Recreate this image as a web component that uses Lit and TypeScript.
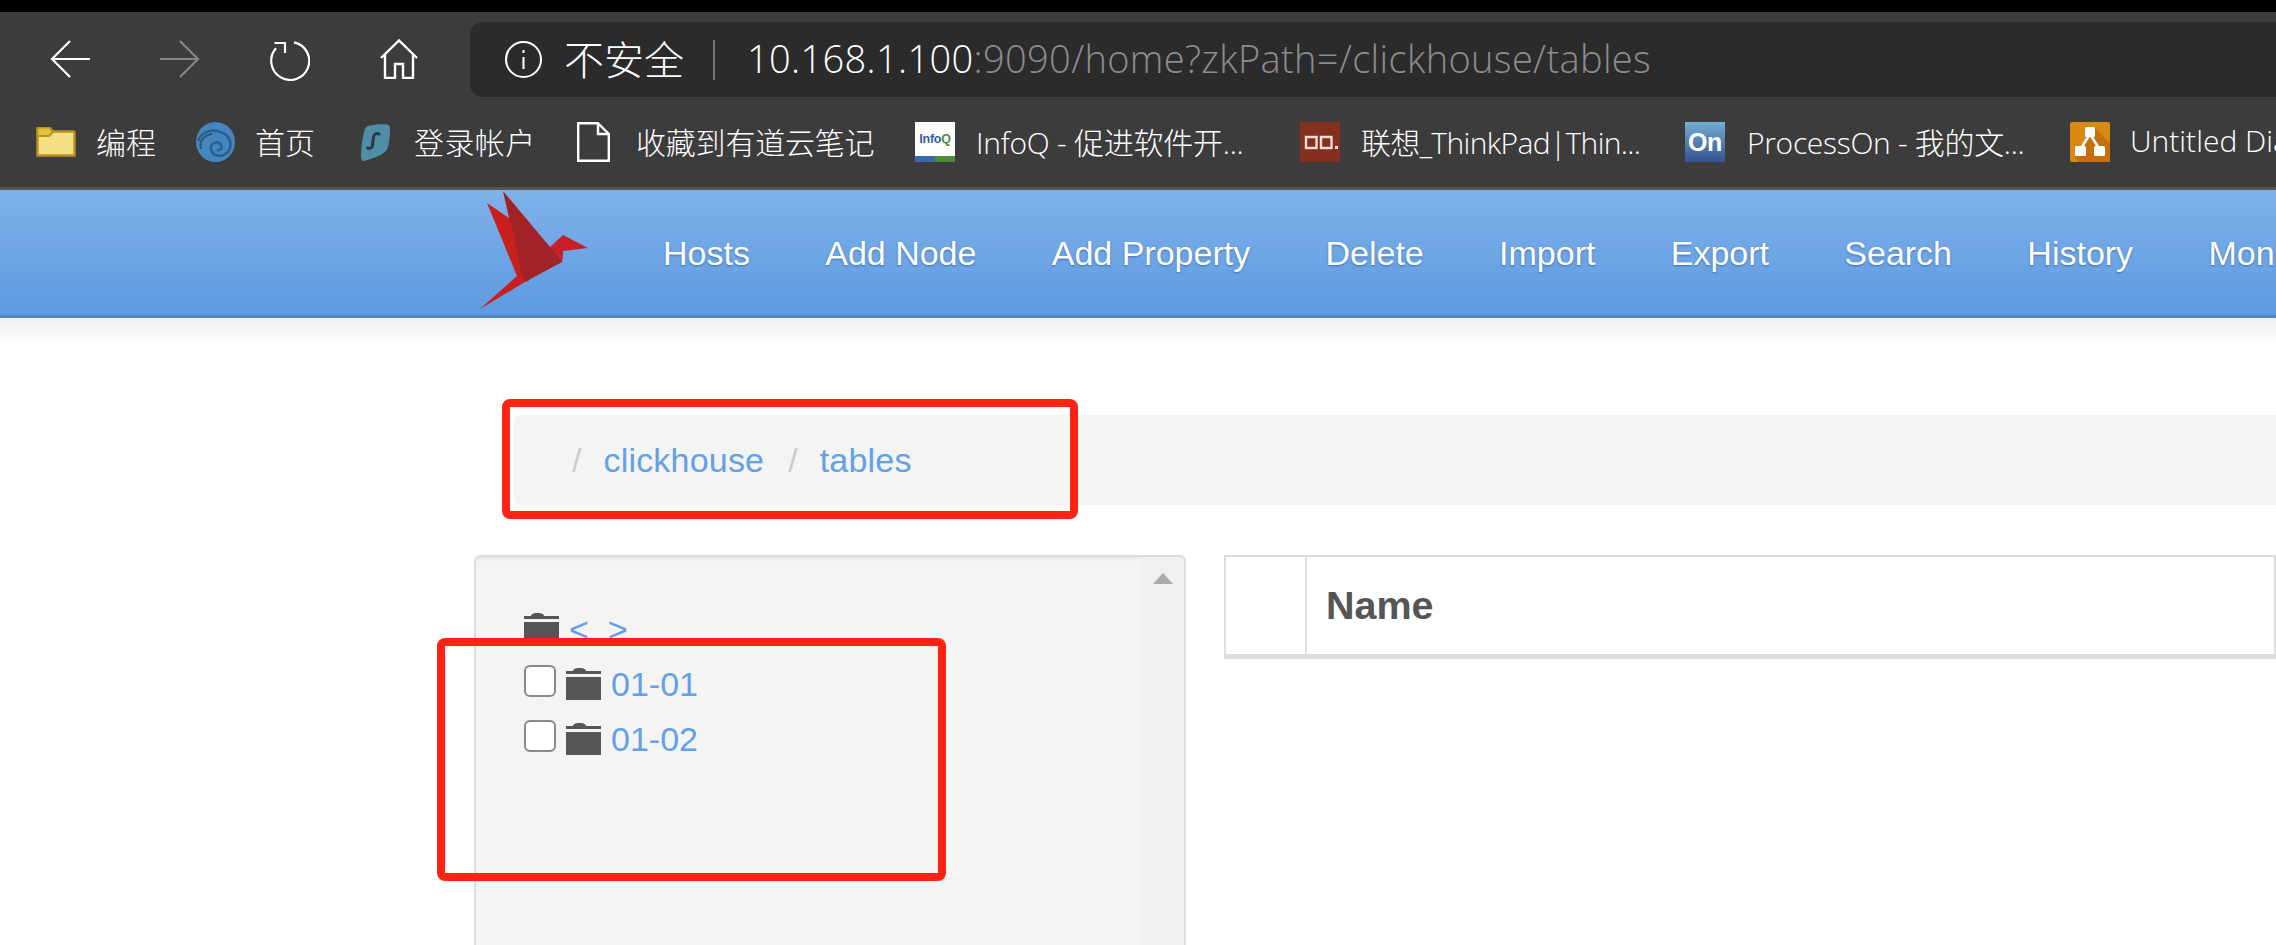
import { LitElement, html, css, svg } from "lit";
import { customElement } from "lit/decorators.js";

const folderIcon = html`<svg width="40" height="30" viewBox="0 0 40 30">
  <path d="M1.5 28.5V2a1.5 1.5 0 0 1 1.5-1.5h10l4 4h20a1.5 1.5 0 0 1 1.5 1.5v22.5z" fill="#f6e084" stroke="#b8951f" stroke-width="2.4"/>
  <path d="M1.5 9V2a1.5 1.5 0 0 1 1.5-1.5h10l4 4.5-4 4z" fill="#e6c243" stroke="#b8951f" stroke-width="2"/>
</svg>`;
const swirlIcon = html`<svg width="41" height="40" viewBox="0 0 41 40">
  <ellipse cx="20.5" cy="20" rx="19.5" ry="20" fill="#4586c0"/>
  <path d="M3 19C7 9 18 6 28 11c8 4 10 14 4 20-6 5-15 3-16-4-1-6 7-9 10-4 2 3-1 6-4 5" fill="none" stroke="#2b5f8f" stroke-width="2.6"/>
  <path d="M6 27c-2-8 3-14 11-15" fill="none" stroke="#34536e" stroke-width="2"/>
</svg>`;
const sharkIcon = html`<svg width="29" height="37" viewBox="0 0 29 37">
  <path d="M7 2C12 .5 20 0 26 .5c2 .2 3 2 3 5 0 8-1 15-3 20-3 5-13 9-23 11.500C1 37 0 35 0 33 0 22 2 11 4 5c.5-1.500 1.500-2.500 3-3z" fill="#4f8ea6"/>
  <path d="M18 10c-3-1-5 0-5.500 3l-1 8c-.4 3-2.500 4-5 3" fill="none" stroke="#2d3a40" stroke-width="3" stroke-linecap="round"/>
</svg>`;
const docIcon = html`<svg width="33" height="40" viewBox="0 0 33 40">
  <path d="M1.200 1.200H21L31.800 12V38.800H1.200zM21 1.200V12H31.800" fill="none" stroke="#fff" stroke-width="2.400"/>
</svg>`;
const drawioIcon = html`<svg width="40" height="40" viewBox="0 0 40 40">
  <rect width="40" height="40" rx="2" fill="#d98a16"/>
  <path d="M24 5l16 16v17a2 2 0 0 1-2 2H8L5 36z" fill="#c4700f"/>
  <path d="M20 12L10 28M20 12l10 16" stroke="#fff" stroke-width="2.500"/>
  <rect x="15" y="5" width="10" height="10" rx="1.500" fill="#fff"/>
  <rect x="5" y="24" width="11" height="10" rx="1.500" fill="#fff"/>
  <rect x="24" y="24" width="11" height="10" rx="1.500" fill="#fff"/>
</svg>`;
const lenovoIcon = html`<svg width="40" height="40" viewBox="0 0 40 40">
  <rect width="40" height="40" fill="#85301f"/>
  <rect x="6" y="15" width="10.500" height="11" fill="#85301f" stroke="#f3dfda" stroke-width="2.400"/>
  <rect x="21" y="15" width="10.500" height="11" fill="#85301f" stroke="#f3dfda" stroke-width="2.400"/>
  <rect x="35" y="24" width="3" height="3" fill="#f3dfda"/>
</svg>`;

interface Bookmark { label: string; textAt: number; spacing: number; icon: unknown; }

const bookmarks: Bookmark[] = [
  { label: "编程", textAt: 60, spacing: 0, icon: folderIcon },
  { label: "首页", textAt: 60, spacing: 0, icon: swirlIcon },
  { label: "登录帐户", textAt: 53, spacing: 0.4, icon: sharkIcon },
  { label: "收藏到有道云笔记", textAt: 59, spacing: -0.2, icon: docIcon },
  { label: "InfoQ - 促进软件开...", textAt: 61, spacing: -0.25, icon: html`<div class="fav infoq"><span class="infoq-name">Info<em>Q</em></span><i class="infoq-bar"></i></div>` },
  { label: "联想_ThinkPad|Thin...", textAt: 61, spacing: -0.65, icon: lenovoIcon },
  { label: "ProcessOn - 我的文...", textAt: 62, spacing: -0.3, icon: html`<div class="fav pon"><span>On</span></div>` },
  { label: "Untitled Diagram", textAt: 60, spacing: 0, icon: drawioIcon },
];

const navItems = ["Hosts", "Add Node", "Add Property", "Delete", "Import", "Export", "Search", "History", "Monitor"];

const treeFolder = svg`<path d="M7 3C7 1.500 9 0 13.500 0S20 1.500 20 3zM0 3h35v3H0zM0 9h35v23H0z" fill="#555"/>`;

@customElement("app-root")
export class AppRoot extends LitElement {
  static styles = css`
    :host { display: block; width: 2276px; height: 945px; overflow: hidden; position: relative; background: #fff; font-family: "Liberation Sans", Arial, sans-serif; }
    .chrome { background: #3c3c3c; border-top: 12px solid #000; border-bottom: 3px solid #555; height: 175px; box-sizing: content-box; display: flex; flex-direction: column; color: #fff; font-family: "Open Sans", "Noto Sans CJK SC", sans-serif; overflow: hidden; }
    .toolbar { display: flex; margin-top: 10px; height: 75px; align-items: center; padding-left: 50px; }
    .navbtns { display: flex; gap: 70px; width: 420px; flex: none; }
    .navbtns svg { display: block; flex: none; }
    .addr { flex: 1; height: 75px; background: #2b2b2b; border-radius: 13px 0 0 13px; display: flex; align-items: center; padding-left: 35px; }
    .addr .secure { font-family: "Noto Sans CJK SC", sans-serif; font-weight: 300; font-size: 40px; line-height: 1; margin: -4px 0 0 22px; }
    .addr .sep { width: 2px; height: 40px; background: #777; margin: 0 32px 0 29px; }
    .url { font-family: "Open Sans", sans-serif; font-weight: 300; font-size: 38px; color: #8c8c8c; white-space: nowrap; letter-spacing: .35px; margin-top: -4px; }
    .url b { font-weight: 300; color: #fff; }
    .bookmarks { height: 90px; display: grid; grid-template-columns: 159px 166px 216px 338px 385px 385px 385px 300px; padding-left: 36px; align-items: center; }
    .bm { display: grid; align-items: center; white-space: nowrap; font-family: "Open Sans", "Noto Sans CJK SC", sans-serif; font-weight: 300; font-size: 30px; }
    .bm > span { margin-top: -3px; }
    .bm svg, .fav { display: block; }
    .fav { width: 40px; height: 40px; position: relative; overflow: hidden; font-family: "Liberation Sans", sans-serif; font-weight: 700; display: flex; align-items: center; justify-content: center; }
    .infoq { background: #fff; color: #2f5fa6; font-size: 12.500px; padding-bottom: 7px; box-sizing: border-box; }
    .infoq em { font-style: normal; color: #4f8a3f; }
    .infoq-bar { position: absolute; left: 0; right: 0; bottom: 0; height: 6px; background: linear-gradient(90deg, #3f66a8 50%, #4f8a3f 50%); }
    .pon { background: linear-gradient(#72afd2, #35528f); color: #fff; font-size: 25px; }
    .nav { height: 125px; border-bottom: 3px solid #5186cb; background: linear-gradient(#7fb2ea, #5e99e0); display: flex; align-items: center; padding-left: 480px; color: #fff; white-space: nowrap; }
    .logo { width: 108px; height: 120px; flex: none; margin-right: 75px; align-self: flex-start; filter: blur(.5px); }
    .menu { display: flex; gap: 75.300px; font-size: 34px; text-shadow: 0 1px 2px rgba(30, 70, 130, .55); margin-top: 1px; }
    .content { height: 627px; background: linear-gradient(#f0f0f0, #fff 30px) no-repeat; padding-top: 97px; box-sizing: border-box; }
    .crumb { margin-left: 514px; height: 90px; background: #f4f4f4; border-radius: 6px 0 0 6px; display: flex; align-items: center; padding-left: 58px; font-size: 34px; color: #62a0e8; }
    .crumb .s { color: #ccc; margin-right: 22px; }
    .crumb a { margin-right: 24px; letter-spacing: .2px; }
    .split { display: flex; margin: 50px 0 0 474px; gap: 38px; align-items: flex-start; }
    .panel { width: 712px; height: 400px; flex: none; box-sizing: border-box; background: #f4f4f4; border: 2px solid #ddd; border-bottom: 0; border-radius: 6px 6px 0 0; box-shadow: inset 0 3px 3px -1px #e6e6e6; display: flex; overflow: hidden; }
    .tree { flex: 1; padding: 56px 0 0 48px; color: #62a0e8; font-size: 34px; }
    .row { height: 55px; display: flex; align-items: flex-start; }
    .row.top { height: 52px; }
    .cb { width: 32px; height: 32px; box-sizing: border-box; background: #fff; border: 2px solid #8a8a8a; border-radius: 6px; margin-right: 10px; flex: none; }
    .row svg { flex: none; margin-right: 10px; margin-top: 3px; }
    .row.top svg { margin-top: 0; }
    .label { line-height: 38px; margin-top: 0; }
    .row.top .label { margin-top: -3px; }
    .scroll { width: 43px; background: #f0f0f0; flex: none; display: flex; justify-content: center; padding-top: 16px; box-sizing: border-box; }
    .tri { width: 0; height: 0; border-left: 10px solid transparent; border-right: 10px solid transparent; border-bottom: 11px solid #aaa; }
    .tbl { flex: 1; height: 104px; box-sizing: border-box; border: solid #ddd; border-width: 2px 2px 5px 2px; display: grid; grid-template-columns: 79px 1fr; margin-right: 0; }
    .th { font-weight: 700; font-size: 39.500px; color: #555; display: flex; align-items: center; padding-left: 19px; border-left: 2px solid #e2e2e2; }
    .mark { position: absolute; box-sizing: border-box; border: 8px solid #ff2313; border-radius: 8px; pointer-events: none; }
    .m1 { left: 502px; top: 399px; width: 576px; height: 120px; }
    .m2 { left: 437px; top: 638px; width: 509px; height: 243px; }
  `;

  render() {
    return html`
      <div class="chrome">
        <div class="toolbar">
          <div class="navbtns">
            <svg width="40" height="40" viewBox="0 0 40 40" fill="none" stroke="#fff" stroke-width="2.200"><path d="M40 20H2M20 2L2 20l18 18"/></svg>
            <svg width="40" height="40" viewBox="0 0 40 40" fill="none" stroke="#858585" stroke-width="2.200"><path d="M0 20h38M20 2l18 18-18 18"/></svg>
            <svg width="40" height="42" viewBox="0 0 40 42" fill="none" stroke="#fff" stroke-width="2.200"><path d="M24 3.300a19 19 0 1 1-18 6M4.500 4h10.500v10"/></svg>
            <svg width="38" height="40" viewBox="0 0 38 40" fill="none" stroke="#fff" stroke-width="2.400"><path d="M1 19L19 1.500 37 19M5 16v23h10V25h8v14h10V16"/></svg>
          </div>
          <div class="addr">
            <svg width="37" height="37" viewBox="0 0 37 37" fill="none" stroke="#fff" stroke-width="2"><circle cx="18.500" cy="18.500" r="17.500"/><path d="M18.500 16v12M18.500 9v3"/></svg>
            <span class="secure">不安全</span>
            <i class="sep"></i>
            <span class="url"><b>10.168.1.100</b>:9090/home?zkPath=/clickhouse/tables</span>
          </div>
        </div>
        <div class="bookmarks">
          ${bookmarks.map((b) => html`<div class="bm" style="grid-template-columns:${b.textAt}px auto;letter-spacing:${b.spacing}px">${b.icon}<span>${b.label}</span></div>`)}
        </div>
      </div>
      <div class="nav">
        <svg class="logo" viewBox="0 0 108 120">
          <path d="M37 86L48 86 45 92 0 119z" fill="#c82020"/>
          <path d="M7 13L29 28 60 60 48 92 37 86z" fill="#c9201f"/>
          <path d="M23 1L70 57 83 61 82 72 45 92 41.700 86 31.700 35 29 28z" fill="#a12227"/>
          <path d="M70 57L83 45 108 58 83 61 82 72z" fill="#c7202a"/>
        </svg>
        <div class="menu">${navItems.map((n) => html`<span>${n}</span>`)}</div>
      </div>
      <div class="content">
        <div class="crumb"><span class="s">/</span><a>clickhouse</a><span class="s">/</span><a>tables</a></div>
        <div class="split">
          <div class="panel">
            <div class="tree">
              <div class="row top"><svg width="35" height="32" viewBox="0 0 35 32">${treeFolder}</svg><span class="label">&lt;&nbsp;&nbsp;&gt;</span></div>
              <div class="row"><i class="cb"></i><svg width="35" height="32" viewBox="0 0 35 32">${treeFolder}</svg><span class="label">01-01</span></div>
              <div class="row"><i class="cb"></i><svg width="35" height="32" viewBox="0 0 35 32">${treeFolder}</svg><span class="label">01-02</span></div>
            </div>
            <div class="scroll"><i class="tri"></i></div>
          </div>
          <div class="tbl"><div></div><div class="th">Name</div></div>
        </div>
      </div>
      <div class="mark m1"></div>
      <div class="mark m2"></div>
    `;
  }
}
